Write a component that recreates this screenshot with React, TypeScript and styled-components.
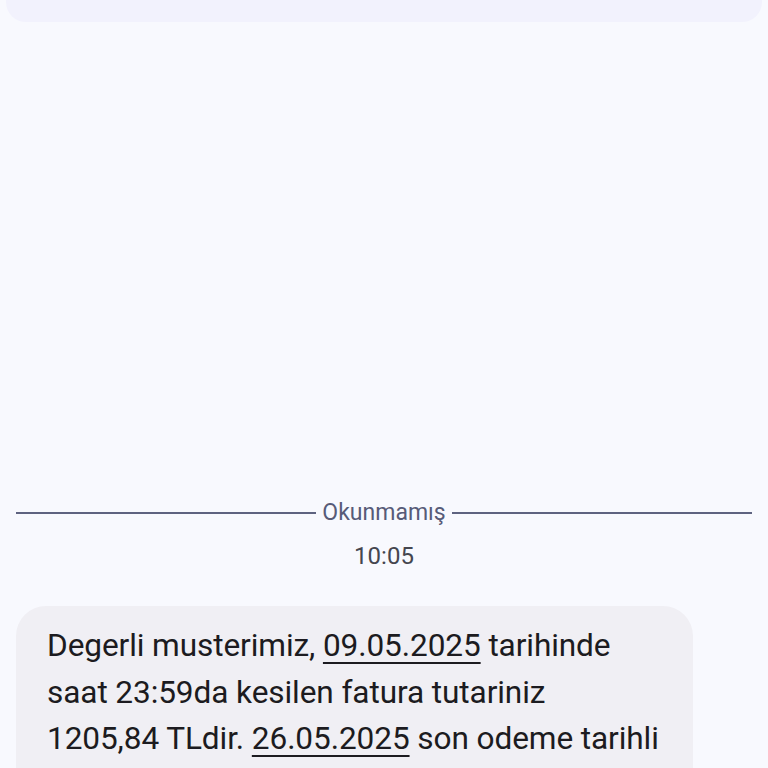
import styled, { createGlobalStyle } from 'styled-components';

const GlobalStyle = createGlobalStyle`
  html, body {
    margin: 0;
    padding: 0;
    background: #f8f9fe;
  }
  body {
    font-family: Roboto, "Noto Sans", sans-serif;
    overflow: hidden;
  }
`;

const Screen = styled.div`
  display: flex;
  flex-direction: column;
  height: 768px;
  overflow: hidden;
  background: #f8f9fe;

  & > * {
    flex-shrink: 0;
  }
`;

const PreviousBubble = styled.div`
  height: 22px;
  margin: 0 6px;
  background: #f2f2fd;
  border-radius: 0 0 20px 20px;
`;

const Divider = styled.div`
  display: flex;
  align-items: center;
  gap: 6px;
  margin: 477px 16px 0;
`;

const DividerLine = styled.div`
  flex: 1;
  height: 2px;
  background: #5e6380;
`;

const DividerLabel = styled.span`
  font-size: 23px;
  line-height: 28px;
  color: #575b78;
`;

const Timestamp = styled.div`
  margin-top: 15px;
  text-align: center;
  font-size: 24px;
  line-height: 28px;
  color: #45464f;
`;

const MessageBubble = styled.div`
  margin: 36px 0 0 16px;
  width: 677px;
  box-sizing: border-box;
  padding: 17px 20px 40px 31px;
  background: #f0eff4;
  border-radius: 30px;
`;

const MessageText = styled.p`
  margin: 0;
  font-size: 31.6px;
  line-height: 46.5px;
  color: #1c1b20;
  white-space: nowrap;
  letter-spacing: -0.1px;
`;

const DateLink = styled.span`
  text-decoration: underline;
  text-decoration-thickness: 2px;
  text-underline-offset: 6px;
`;

export default function App() {
  return (
    <>
      <GlobalStyle />
      <Screen>
        <PreviousBubble />
        <Divider>
          <DividerLine />
          <DividerLabel>Okunmamış</DividerLabel>
          <DividerLine />
        </Divider>
        <Timestamp>10:05</Timestamp>
        <MessageBubble>
          <MessageText>
            Degerli musterimiz, <DateLink>09.05.2025</DateLink> tarihinde
            <br />
            saat 23:59da kesilen fatura tutariniz
            <br />
            1205,84 TLdir. <DateLink>26.05.2025</DateLink> son odeme tarihli
          </MessageText>
        </MessageBubble>
      </Screen>
    </>
  );
}
